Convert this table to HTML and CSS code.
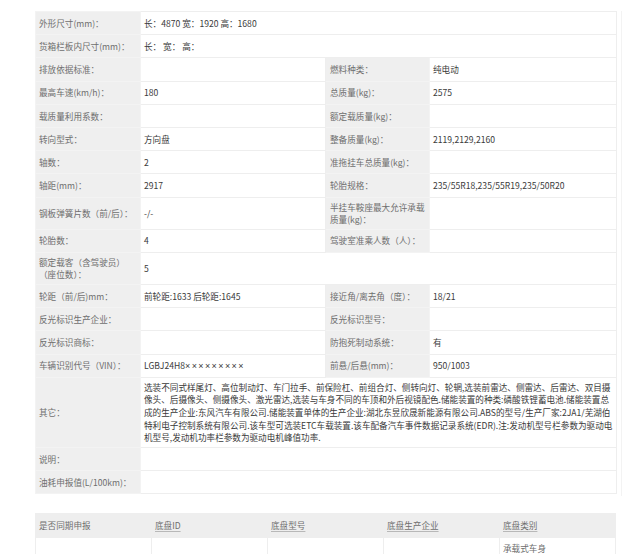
FILE: index.html
```html
<!DOCTYPE html>
<html lang="zh-CN">
<head>
<meta charset="utf-8">
<title>车辆参数</title>
<link rel="stylesheet" href="styles.css">
</head>
<body>
<div class="page">
  <div class="panel">
    <table class="spec">
      <colgroup><col class="c1"><col class="c2"><col class="c3"><col class="c4"></colgroup>
      <tr><td class="lb">外形尺寸(mm)：</td><td class="vl" colspan="3">长：4870 宽：1920 高：1680</td></tr>
      <tr><td class="lb">货箱栏板内尺寸(mm)：</td><td class="vl" colspan="3">长： 宽： 高：</td></tr>
      <tr><td class="lb">排放依据标准：</td><td class="vl"></td><td class="lb lb2">燃料种类：</td><td class="vl vl2">纯电动</td></tr>
      <tr><td class="lb">最高车速(km/h)：</td><td class="vl">180</td><td class="lb lb2">总质量(kg)：</td><td class="vl vl2">2575</td></tr>
      <tr><td class="lb">载质量利用系数：</td><td class="vl"></td><td class="lb lb2">额定载质量(kg)：</td><td class="vl vl2"></td></tr>
      <tr><td class="lb">转向型式：</td><td class="vl">方向盘</td><td class="lb lb2">整备质量(kg)：</td><td class="vl vl2">2119,2129,2160</td></tr>
      <tr><td class="lb">轴数：</td><td class="vl">2</td><td class="lb lb2">准拖挂车总质量(kg)：</td><td class="vl vl2"></td></tr>
      <tr><td class="lb">轴距(mm)：</td><td class="vl">2917</td><td class="lb lb2">轮胎规格：</td><td class="vl vl2">235/55R18,235/55R19,235/50R20</td></tr>
      <tr><td class="lb">钢板弹簧片数（前/后）：</td><td class="vl">-/-</td><td class="lb lb2">半挂车鞍座最大允许承载质量(kg)：</td><td class="vl vl2"></td></tr>
      <tr><td class="lb">轮胎数：</td><td class="vl">4</td><td class="lb lb2">驾驶室准乘人数（人）：</td><td class="vl vl2"></td></tr>
      <tr><td class="lb"><span class="nw">额定载客（含驾驶员）</span> <span class="nw">（座位数）：</span></td><td class="vl" colspan="3">5</td></tr>
      <tr><td class="lb">轮距（前/后)mm：</td><td class="vl">前轮距:1633 后轮距:1645</td><td class="lb lb2">接近角/离去角（度）：</td><td class="vl vl2">18/21</td></tr>
      <tr><td class="lb">反光标识生产企业：</td><td class="vl"></td><td class="lb lb2">反光标识型号：</td><td class="vl vl2"></td></tr>
      <tr><td class="lb">反光标识商标：</td><td class="vl"></td><td class="lb lb2">防抱死制动系统：</td><td class="vl vl2">有</td></tr>
      <tr><td class="lb">车辆识别代号（VIN）：</td><td class="vl">LGBJ24H8<span class="x">×××××××××</span></td><td class="lb lb2">前悬/后悬(mm)：</td><td class="vl vl2">950/1003</td></tr>
      <tr><td class="lb">其它：</td><td class="vl other" colspan="3"><span class="ln">选装不同式样尾灯、高位制动灯、车门拉手、前保险杠、前组合灯、侧转向灯、轮辋,选装前雷达、侧雷达、后雷达、双目摄</span><span class="ln">像头、后摄像头、侧摄像头、激光雷达,选装与车身不同的车顶和外后视镜配色.储能装置的种类:磷酸铁锂蓄电池.储能装置总</span><span class="ln">成的生产企业:东风汽车有限公司.储能装置单体的生产企业:湖北东昱欣晟新能源有限公司.ABS的型号/生产厂家:2JA1/芜湖伯</span><span class="ln">特利电子控制系统有限公司.该车型可选装ETC车载装置.该车配备汽车事件数据记录系统(EDR).注:发动机型号栏参数为驱动电</span><span class="ln">机型号,发动机功率栏参数为驱动电机峰值功率.</span></td></tr>
      <tr><td class="lb">说明：</td><td class="vl" colspan="3"></td></tr>
      <tr><td class="lb">油耗申报值(L/100km)：</td><td class="vl" colspan="3"></td></tr>
    </table>
  </div>
  <table class="chassis">
    <tr class="head"><th>是否同期申报</th><th><span class="ul">底盘ID</span></th><th><span class="ul">底盘型号</span></th><th><span class="ul">底盘生产企业</span></th><th><span class="ul">底盘类别</span></th></tr>
    <tr class="body"><td></td><td></td><td></td><td></td><td>承载式车身</td></tr>
  </table>
</div>
</body>
</html>
```

FILE: styles.css
```css
html, body {
  margin: 0;
  padding: 0;
  background: #ffffff;
}
body {
  font-family: "Noto Sans CJK SC", "Microsoft YaHei", sans-serif;
  font-size: 8.6px;
  line-height: 12.6px;
  color: #333333;
  overflow: hidden;
}
.page {
  padding: 11px 0 0 35px;
}
.panel {
  width: 586px;
  border-right: 1px solid #f3f3f3;
  padding-bottom: 2px;
}
.spec {
  width: 581px;
  table-layout: fixed;
  border-collapse: collapse;
}
.c1 { width: 105px; }
.c2 { width: 185px; }
.c3 { width: 104px; }
.c4 { width: 187px; }
.spec tr {
  height: 23.2px;
}
.spec td {
  border: 1px solid #eeeeee;
  padding: 3px 0 3px 3px;
  vertical-align: middle;
}
.spec td.lb {
  background: #efefef;
  color: #6e6e6e;
  border-color: #f3f3f3;
}
.spec td.lb2 {
  padding-left: 4px;
}
.spec td.vl {
  color: #3a3a3a;
}
.nw {
  white-space: nowrap;
}
.x {
  font-family: "Liberation Sans", sans-serif;
  font-size: 9px;
  letter-spacing: 1.4px;
}
.spec td.other {
  padding-top: 3px;
  padding-bottom: 3px;
}
.ln {
  display: block;
  white-space: nowrap;
}
.chassis {
  margin-top: 17px;
  width: 581px;
  table-layout: fixed;
  border-collapse: collapse;
}
.chassis th {
  background: #eeeeee;
  color: #6e6e6e;
  font-weight: normal;
  text-align: left;
  height: 23px;
  padding: 0 0 0 3px;
  border: 1px solid #eeeeee;
}
.chassis .ul {
  text-decoration: underline;
  text-decoration-color: #b8b8b8;
  text-underline-offset: 2px;
}
.chassis td {
  border: 1px solid #eeeeee;
  border-top: none;
  padding: 4px 0 5px 3px;
  height: 40px;
  vertical-align: top;
  color: #6e6e6e;
}
```
